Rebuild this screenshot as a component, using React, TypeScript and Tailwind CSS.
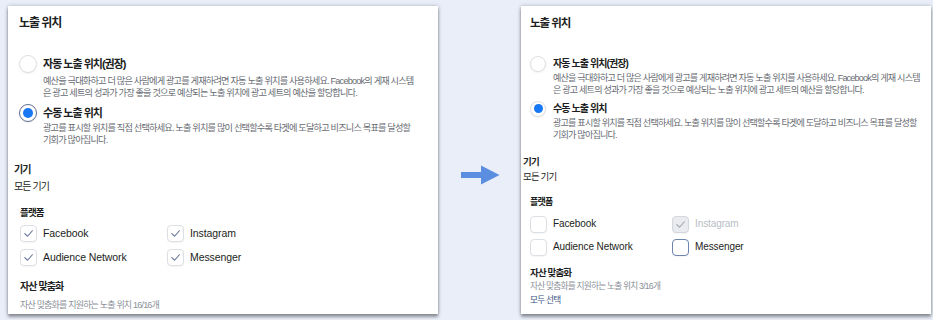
import React from 'react';

type Size = {
  panel: string;
  title: string;
  group: string;
  label: string;
  desc: string;
  radio: string;
  dot: string;
  radioGap: string;
  item2: string;
  descTop1: string;
  descTop2: string;
  device: string;
  deviceValue: string;
  platform: string;
  grid: string;
  box: string;
  boxGap: string;
  option: string;
  asset: string;
  assetSub: string;
  selectAll: string;
};

const big: Size = {
  panel: 'w-[430px] pl-[11px]',
  title: 'text-[12px] leading-[18px]',
  group: 'mt-[24px]',
  label: 'text-[11px] leading-[16px]',
  desc: 'text-[9.2px] leading-[11.5px]',
  radio: 'w-[18px] h-[18px] mt-[-1px]',
  dot: 'w-[10px] h-[10px]',
  radioGap: 'gap-[6px]',
  item2: 'mt-[6px]',
  descTop1: 'mt-[4px]',
  descTop2: 'mt-[2px]',
  device: 'mt-[16px] -ml-[5px] text-[10px] leading-[16px]',
  deviceValue: 'mt-[1px] -ml-[5px] text-[10px] leading-[16px]',
  platform: 'mt-[10px] ml-[1px] text-[9.5px] leading-[16px]',
  grid: 'mt-[2px] ml-[1px] grid-cols-[147px_auto] gap-y-[4px]',
  box: 'w-[17px] h-[17px]',
  boxGap: 'gap-[6px]',
  option: 'text-[10.5px] leading-[20px] h-[20px]',
  asset: 'mt-[12px] ml-[1px] text-[10px] leading-[16px]',
  assetSub: 'mt-[3px] ml-[1px] text-[9px] leading-[14px]',
  selectAll: '',
};

const small: Size = {
  panel: 'w-[410px] pl-[9px]',
  title: 'text-[11.5px] leading-[18px]',
  group: 'mt-[24px]',
  label: 'text-[10px] leading-[15px]',
  desc: 'text-[9.1px] leading-[12px]',
  radio: 'w-[16px] h-[16px] mt-[-0.5px]',
  dot: 'w-[9px] h-[9px]',
  radioGap: 'gap-[7px]',
  item2: 'mt-[5px]',
  descTop1: 'mt-[1px]',
  descTop2: 'mt-[1px]',
  device: 'mt-[13px] -ml-[7px] text-[9.5px] leading-[15px]',
  deviceValue: 'mt-[0px] -ml-[7px] text-[9.5px] leading-[15px]',
  platform: 'mt-[11px] text-[9px] leading-[15px]',
  grid: 'mt-[5px] grid-cols-[142px_auto] gap-y-[5px]',
  box: 'w-[17px] h-[17px]',
  boxGap: 'gap-[6px]',
  option: 'text-[10px] leading-[18px] h-[18px]',
  asset: 'mt-[9px] text-[9.5px] leading-[15px]',
  assetSub: 'mt-[0px] text-[8.7px] leading-[13px]',
  selectAll: 'mt-[1px]',
};

type Box = 'on' | 'off' | 'disabled' | 'focus';

const Check = ({ color }: { color: string }) => (
  <svg viewBox="0 0 17 17" className="w-full h-full">
    <path d="M4.3 8.6 L7.4 11.6 L12.9 5.4" fill="none" stroke={color} strokeWidth="1.2" strokeLinecap="round" strokeLinejoin="round" />
  </svg>
);

const CheckBox = ({ state, s }: { state: Box; s: Size }) => {
  const look =
    state === 'disabled'
      ? 'bg-[#e9ebee] border-[#d3d6db]'
      : state === 'focus'
        ? 'bg-white border-[#6e84ad] border-[1.5px]'
        : 'bg-white border-[#dcdfe4]';
  return (
    <span className={`${s.box} shrink-0 rounded-[4px] border ${look} shadow-[0_1px_1px_rgba(0,0,0,0.04)]`}>
      {state === 'on' && <Check color="#5d6f93" />}
      {state === 'disabled' && <Check color="#9da3ad" />}
    </span>
  );
};

const Radio = ({ checked, s, bold }: { checked: boolean; s: Size; bold: boolean }) => (
  <span
    className={`${s.radio} shrink-0 rounded-full bg-white flex items-center justify-center ${
      checked && bold ? 'border-[1.5px] border-[#5f6f8f]' : 'border border-[#dcdfe4]'
    } shadow-[0_1px_2px_rgba(0,0,0,0.06)]`}
  >
    {checked && <span className={`${s.dot} rounded-full bg-[#1877f2]`} />}
  </span>
);

const Panel = ({ s, boxes, count, selectAll, bold }: { s: Size; boxes: Box[]; count: string; selectAll?: boolean; bold: boolean }) => {
  const names = ['Facebook', 'Instagram', 'Audience Network', 'Messenger'];
  return (
    <section
      className={`${s.panel} h-[308px] shrink-0 bg-white pt-[8px] text-[#1c1e21] shadow-[0_3px_3px_rgba(0,0,0,0.35),0_0_4px_rgba(0,0,0,0.25)]`}
    >
      <h2 className={`${s.title} font-bold tracking-[-0.09em]`}>노출 위치</h2>

      <div className={s.group}>
        <div className={`flex ${s.radioGap}`}>
          <Radio checked={false} s={s} bold={bold} />
          <div>
            <div className={`${s.label} font-semibold tracking-[-0.09em]`}>자동 노출 위치(권장)</div>
            <p className={`${s.descTop1} ${s.desc} text-[#676b72] tracking-[-0.09em] whitespace-nowrap`}>
              예산을 극대화하고 더 많은 사람에게 광고를 게재하려면 자동 노출 위치를 사용하세요. Facebook의 게재 시스템
              <br />
              은 광고 세트의 성과가 가장 좋을 것으로 예상되는 노출 위치에 광고 세트의 예산을 할당합니다.
            </p>
          </div>
        </div>
        <div className={`flex ${s.radioGap} ${s.item2}`}>
          <Radio checked s={s} bold={bold} />
          <div>
            <div className={`${s.label} font-semibold tracking-[-0.09em]`}>수동 노출 위치</div>
            <p className={`${s.descTop2} ${s.desc} text-[#676b72] tracking-[-0.09em] whitespace-nowrap`}>
              광고를 표시할 위치를 직접 선택하세요. 노출 위치를 많이 선택할수록 타겟에 도달하고 비즈니스 목표를 달성할
              <br />
              기회가 많아집니다.
            </p>
          </div>
        </div>
      </div>

      <div className={`${s.device} font-bold tracking-[-0.09em]`}>기기</div>
      <div className={`${s.deviceValue} tracking-[-0.09em]`}>모든 기기</div>

      <div className={`${s.platform} font-bold tracking-[-0.09em]`}>플랫폼</div>
      <div className={`grid ${s.grid}`}>
        {names.map((n, i) => (
          <label key={n} className={`flex items-center ${s.boxGap} ${s.option}`}>
            <CheckBox state={boxes[i]} s={s} />
            <span className={`tracking-[-0.1px] ${boxes[i] === 'disabled' ? 'text-[#b8bcc3]' : 'text-[#1c1e21]'}`}>{n}</span>
          </label>
        ))}
      </div>

      <div className={`${s.asset} font-bold tracking-[-0.09em]`}>자산 맞춤화</div>
      <div className={`${s.assetSub} text-[#8a8f97] tracking-[-0.09em]`}>자산 맞춤화를 지원하는 노출 위치 {count}개</div>
      {selectAll && (
        <div className={`${s.selectAll} text-[8.7px] leading-[13px] text-[#3b5584] tracking-[-0.09em]`}>모두 선택</div>
      )}
    </section>
  );
};

export default function App() {
  return (
    <div className="h-[320px] w-[933px] overflow-hidden bg-[#e9eef9] flex pt-[6px] pl-[8px] font-['Liberation_Sans','Noto_Sans_CJK_KR',sans-serif]">
      <Panel s={big} boxes={['on', 'on', 'on', 'on']} count="16/16" bold />
      <div className="w-[83px] shrink-0 flex justify-center">
        <svg viewBox="0 0 40 20" className="mt-[159px] w-[40px] h-[20px]">
          <path d="M1 7 H21 V0.5 L39.5 10 L21 19.5 V13 H1 Z" fill="#5b8de0" />
        </svg>
      </div>
      <Panel s={small} boxes={['off', 'disabled', 'off', 'focus']} count="3/16" selectAll bold={false} />
    </div>
  );
}
